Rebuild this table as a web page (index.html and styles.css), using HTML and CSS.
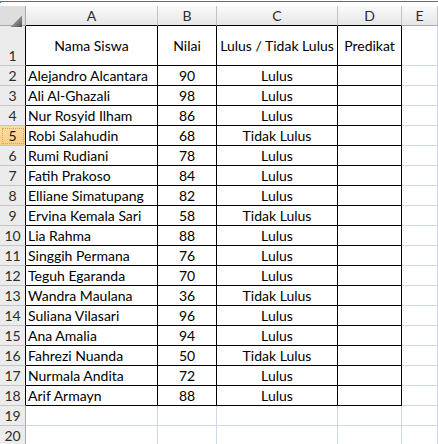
FILE: index.html
```html
<!DOCTYPE html>
<html>
<head>
<meta charset="utf-8">
<link rel="stylesheet" href="styles.css">
</head>
<body>
<div class="topbar"><span class="mark"></span></div>
<div class="sheet">
  <div class="corner"><span class="tri"></span></div>
  <div class="h tb">A</div><div class="h tb">B</div><div class="h tb">C</div><div class="h tb">D</div><div class="h">E</div>

  <div class="r tall">1</div>
  <div class="c t mid ctr">Nama Siswa</div><div class="c t mid ctr">Nilai</div><div class="c t mid ctr">Lulus / Tidak Lulus</div><div class="c t mid ctr">Predikat</div><div class="c"></div>

  <div class="r">2</div><div class="c t">Alejandro Alcantara</div><div class="c t ctr">90</div><div class="c t ctr">Lulus</div><div class="c t"></div><div class="c"></div>
  <div class="r">3</div><div class="c t">Ali Al-Ghazali</div><div class="c t ctr">98</div><div class="c t ctr">Lulus</div><div class="c t"></div><div class="c"></div>
  <div class="r">4</div><div class="c t">Nur Rosyid Ilham</div><div class="c t ctr">86</div><div class="c t ctr">Lulus</div><div class="c t"></div><div class="c"></div>
  <div class="r sel">5</div><div class="c t">Robi Salahudin</div><div class="c t ctr">68</div><div class="c t ctr">Tidak Lulus</div><div class="c t"></div><div class="c"></div>
  <div class="r">6</div><div class="c t">Rumi Rudiani</div><div class="c t ctr">78</div><div class="c t ctr">Lulus</div><div class="c t"></div><div class="c"></div>
  <div class="r">7</div><div class="c t">Fatih Prakoso</div><div class="c t ctr">84</div><div class="c t ctr">Lulus</div><div class="c t"></div><div class="c"></div>
  <div class="r">8</div><div class="c t">Elliane Simatupang</div><div class="c t ctr">82</div><div class="c t ctr">Lulus</div><div class="c t"></div><div class="c"></div>
  <div class="r">9</div><div class="c t">Ervina Kemala Sari</div><div class="c t ctr">58</div><div class="c t ctr">Tidak Lulus</div><div class="c t"></div><div class="c"></div>
  <div class="r">10</div><div class="c t">Lia Rahma</div><div class="c t ctr">88</div><div class="c t ctr">Lulus</div><div class="c t"></div><div class="c"></div>
  <div class="r">11</div><div class="c t">Singgih Permana</div><div class="c t ctr">76</div><div class="c t ctr">Lulus</div><div class="c t"></div><div class="c"></div>
  <div class="r">12</div><div class="c t">Teguh Egaranda</div><div class="c t ctr">70</div><div class="c t ctr">Lulus</div><div class="c t"></div><div class="c"></div>
  <div class="r">13</div><div class="c t">Wandra Maulana</div><div class="c t ctr">36</div><div class="c t ctr">Tidak Lulus</div><div class="c t"></div><div class="c"></div>
  <div class="r">14</div><div class="c t">Suliana Vilasari</div><div class="c t ctr">96</div><div class="c t ctr">Lulus</div><div class="c t"></div><div class="c"></div>
  <div class="r">15</div><div class="c t">Ana Amalia</div><div class="c t ctr">94</div><div class="c t ctr">Lulus</div><div class="c t"></div><div class="c"></div>
  <div class="r">16</div><div class="c t">Fahrezi Nuanda</div><div class="c t ctr">50</div><div class="c t ctr">Tidak Lulus</div><div class="c t"></div><div class="c"></div>
  <div class="r">17</div><div class="c t">Nurmala Andita</div><div class="c t ctr">72</div><div class="c t ctr">Lulus</div><div class="c t"></div><div class="c"></div>
  <div class="r">18</div><div class="c t">Arif Armayn</div><div class="c t ctr">88</div><div class="c t ctr">Lulus</div><div class="c t"></div><div class="c"></div>
  <div class="r g">19</div><div class="c"></div><div class="c"></div><div class="c"></div><div class="c"></div><div class="c"></div>
  <div class="r g">20</div><div class="c"></div><div class="c"></div><div class="c"></div><div class="c"></div><div class="c"></div>
</div>
</body>
</html>
```

FILE: styles.css
```css
* { box-sizing: border-box; }
html, body { margin: 0; padding: 0; background: #ffffff; overflow: hidden; }
body {
  width: 438px;
  height: 444px;
  font-family: "Lato", "Liberation Sans", sans-serif;
  font-size: 14px;
  color: #000;
}
.topbar {
  height: 6px;
  border-top: 1px solid #ffffff;
  position: relative;
  background: #ffffff;
}
.topbar::before {
  content: "";
  display: block;
  height: 1px;
  background: #6b6b6b;
}
.mark {
  position: absolute;
  left: 0;
  top: 0;
  width: 1px;
  height: 2px;
  background: #3c86d8;
}
.sheet {
  display: grid;
  grid-template-columns: 26px 132px 59px 121px 64px 1fr;
  grid-template-rows: 20px 40px repeat(19, 20px);
}
.corner {
  background: #dedede;
  border-right: 1px solid #a9a9a9;
  border-bottom: 1px solid #a9a9a9;
  position: relative;
}
.tri {
  position: absolute;
  left: 11px;
  top: 10px;
  width: 11px;
  height: 11px;
  background: linear-gradient(135deg, transparent 50%, #8e8e8e 50%, #4a4a4a 100%);
}
.h {
  background: linear-gradient(#fafafa, #e6e6e6);
  border-right: 1px solid #c3c3c3;
  border-bottom: 1px solid #a9a9a9;
  color: #2c2c2c;
  text-align: center;
  line-height: 19px;
}
.h.tb { border-bottom-color: #000; }
.r {
  background: #ececec;
  border-right: 1px solid #000;
  border-bottom: 1px solid #c6c6c6;
  color: #2c2c2c;
  text-align: center;
  line-height: 19px;
}
.r.g { border-right-color: #a9a9a9; }
.r.tall {
  display: flex;
  align-items: flex-end;
  justify-content: center;
  padding-bottom: 0;
}
.r.sel {
  background: linear-gradient(#fbdca4, #f7cd86);
  outline: 1px dotted #d9a45a;
  outline-offset: -3px;
  color: #1a1a1a;
}
.c {
  border-right: 1px solid #d0d7e5;
  border-bottom: 1px solid #d0d7e5;
  line-height: 19px;
  padding-left: 2px;
  white-space: nowrap;
  overflow: hidden;
}
.c.t {
  border-right-color: #000;
  border-bottom-color: #000;
}
.ctr { text-align: center; padding-left: 0; }
.mid {
  display: flex;
  align-items: center;
  justify-content: center;
}
```
